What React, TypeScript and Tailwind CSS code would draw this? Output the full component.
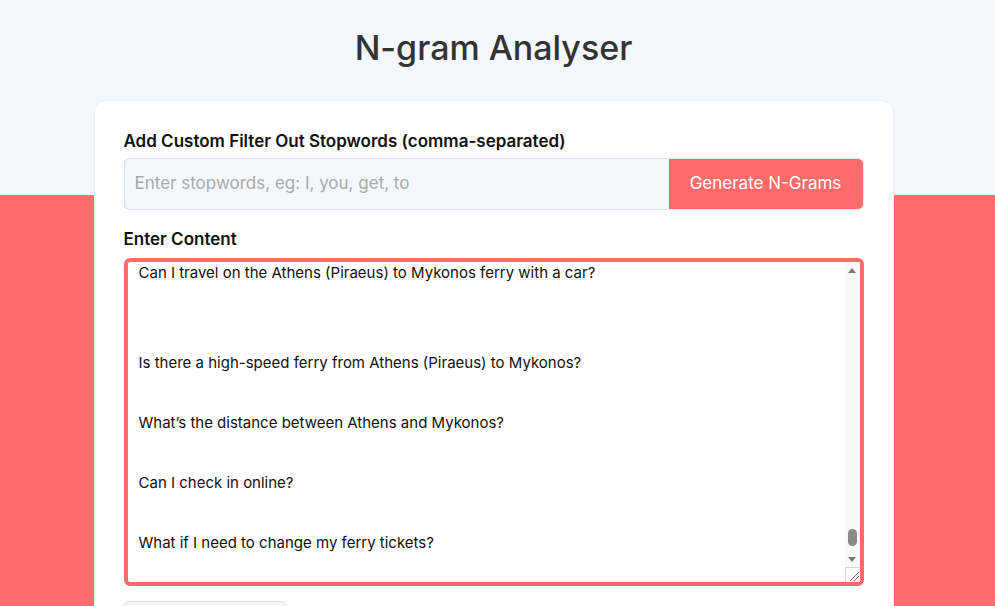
import React, { useEffect, useRef } from "react";

const questions = [
  "How long does the ferry from Athens to Mykonos take?",
  "How much does the ferry from Athens to Mykonos cost?",
  "Which ports do ferries from Athens to Mykonos leave from?",
  "How many ferries per day go from Athens to Mykonos?",
  "Which ferry companies operate the Athens to Mykonos route?",
  "Can I book my Athens to Mykonos ferry tickets online?",
  "Do I need to print my ferry tickets?",
  "What time should I arrive at the port?",
  "Is there a ferry from Rafina to Mykonos?",
  "Is there a ferry from Lavrio to Mykonos?",
  "How do I get from Athens airport to Piraeus port?",
  "How do I get from Athens airport to Rafina port?",
  "Can I bring my pet on the ferry?",
  "How much luggage can I take on the ferry?",
  "Are there discounts for students or seniors?",
  "When should I book my ferry tickets?",
  "Is the ferry from Athens to Mykonos comfortable?",
  "Are there cabins on the Athens to Mykonos ferry?",
  "Is there Wi-Fi on board the ferry?",
  "Can I buy food and drinks on the ferry?",
  "What happens if the ferry is cancelled due to weather?",
  "Is the sea rough between Athens and Mykonos?",
  "Can I travel on the Athens (Piraeus) to Mykonos ferry with a car?\n",
  "Is there a high-speed ferry from Athens (Piraeus) to Mykonos?",
  "What\u2019s the distance between Athens and Mykonos?",
  "Can I check in online?",
  "What if I need to change my ferry tickets?",
];

const content = questions.join("\n\n");

export default function App() {
  const ref = useRef<HTMLTextAreaElement>(null);
  useEffect(() => {
    const el = ref.current;
    if (el) {
      el.scrollTop = el.scrollHeight;
    }
  }, []);

  return (
    <div
      className="min-h-screen bg-[#ff6b6b] text-[#1a1a1a]"
      style={{ fontFamily: "Inter, 'Noto Sans', sans-serif" }}
    >
      <div className="bg-[#f4f7fd] h-[195px] pr-2 pt-[27px]">
        <h1 className="text-center text-[34px] leading-[42px] font-medium text-[#333333]">
          N-gram Analyser
        </h1>
      </div>
      <div className="pr-2 -mt-[95px]">
        <div className="mx-auto w-[800px] bg-white rounded-xl border border-[#eceff5] px-[29px] pt-[29px] pb-8">
          <label className="block text-[17px] leading-[22px] font-semibold text-[#111] mb-[6px]">
            Add Custom Filter Out Stopwords (comma-separated)
          </label>
          <div className="flex h-[52px]">
            <input
              type="text"
              placeholder="Enter stopwords, eg: I, you, get, to"
              className="flex-1 min-w-0 bg-[#f4f7fd] border border-[#dcdfe4] border-r-0 rounded-l-md px-[10px] text-[17px] placeholder:text-[#aaaaaa] outline-none"
            />
            <button className="w-[195px] bg-[#ff6b6b] text-white text-[17px] rounded-r-md border border-[#e6e6e6] border-l-0">
              Generate N-Grams
            </button>
          </div>
          <label className="block mt-[18px] text-[17px] leading-[22px] font-semibold text-[#111] mb-[8px]">
            Enter Content
          </label>
          <div className="relative">
            <textarea
              ref={ref}
              defaultValue={content}
              className="block w-full h-[328px] border-4 border-[#ff6b6b] rounded-md pl-[11px] pr-[27px] pt-3 pb-6 text-[15px] leading-[30px] text-[#111] outline-none resize-none [scrollbar-width:none]"
            />
            <div className="absolute right-[4px] top-[4px] bottom-[4px] w-[15px] bg-[#f8f8f8] flex flex-col items-center">
              <div className="h-[15px] flex items-center justify-center pt-[1px]">
                <div className="w-0 h-0 border-l-[4.5px] border-r-[4.5px] border-b-[5px] border-l-transparent border-r-transparent border-b-[#7a7a7a]" />
              </div>
              <div className="flex-1 w-full flex flex-col items-center justify-end">
                <div className="w-[9px] h-[17px] rounded-full bg-[#8a8a8a] mb-[6px]" />
              </div>
              <div className="h-[15px] flex items-center justify-center">
                <div className="w-0 h-0 border-l-[4.5px] border-r-[4.5px] border-t-[5px] border-l-transparent border-r-transparent border-t-[#7a7a7a]" />
              </div>
              <div className="w-[15px] h-[15px] bg-white border-l border-t border-[#d8d8d8] relative overflow-hidden">
                <svg width="15" height="15" viewBox="0 0 15 15" className="absolute right-0 bottom-0">
                  <line x1="5" y1="14" x2="14" y2="5" stroke="#555" strokeWidth="0.8" />
                  <line x1="9" y1="14" x2="14" y2="9" stroke="#555" strokeWidth="0.8" />
                </svg>
              </div>
            </div>
          </div>
          <div className="mt-[15px] flex">
            <button className="w-[163px] h-[44px] bg-[#f4f7fd] border border-[#dcdfe4] rounded-md text-[15px] text-[#333]">
              Download CSV
            </button>
          </div>
        </div>
      </div>
    </div>
  );
}
